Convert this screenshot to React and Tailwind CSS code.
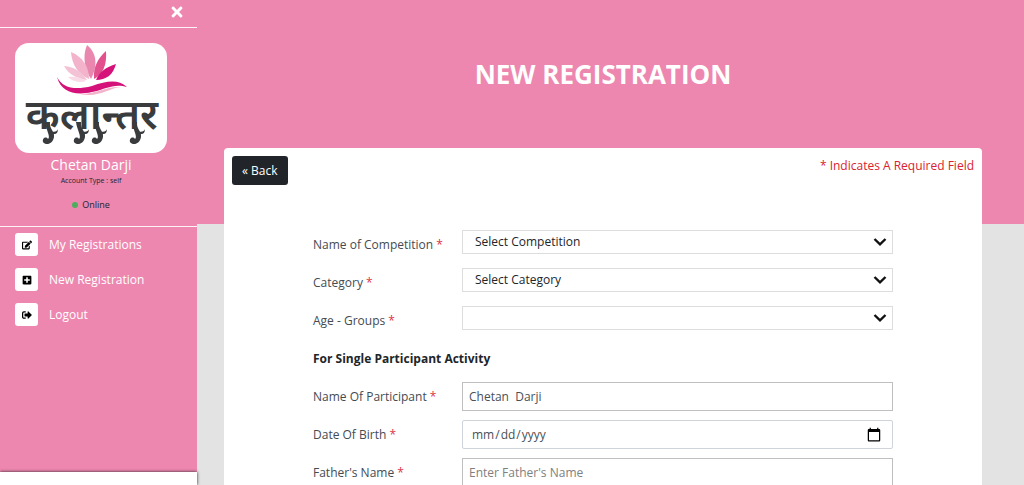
import { FaEdit, FaPlusSquare, FaSignOutAlt, FaTimes } from 'react-icons/fa';

const menuItems = [
  { label: 'My Registrations', icon: FaEdit },
  { label: 'New Registration', icon: FaPlusSquare },
  { label: 'Logout', icon: FaSignOutAlt },
];

function Logo() {
  return (
    <svg viewBox="0 0 152 110" className="block w-full" role="img" aria-label="Logo">
      {/* lotus petals */}
      <path d="M72 2C67 14 70 27 76 36C82 24 83 11 72 2Z" fill="#e987ae" />
      <path d="M56 9C57 22 63 31 74 36C74 24 68 14 56 9Z" fill="#f2b3cb" />
      <path d="M49 23C53 31 63 36 72 37C67 29 60 24 49 23Z" fill="#f4c2d5" />
      <path d="M53 34C58 39 65 40 71 38C66 34 60 33 53 34Z" fill="#f8dbe6" />
      <path d="M91 8C83 15 78 24 79 36C88 31 92 22 91 8Z" fill="#e2508d" />
      <path d="M101 21C91 24 84 29 81 37C91 37 98 32 101 21Z" fill="#d5127a" />
      <path d="M42 34C48 46 61 47 77 43C92 38 103 36 112 44C99 40 91 46 77 49C60 53 46 49 42 34Z" fill="#d5127a" />
      <path d="M65 51C81 51 92 43 106 44C94 45 84 55 65 51Z" fill="#f2b3cb" />
      <text
        x="77"
        y="86"
        textAnchor="middle"
        fontSize="42"
        fontWeight="600"
        fill="#393b3d"
        className="font-['Noto_Sans_Devanagari','Noto_Sans',sans-serif]"
      >
        कलान्तर
      </text>
      {/* ink flourishes under the wordmark */}
      <g fill="#393b3d">
        <path d="M35 79C34 86 40 88 39 94C38 101 31 103 28 99C27 95 31 93 33 96C36 94 31 87 30 79ZM35 87C38 90 42 89 43 86C43 92 38 93 35 87Z" />
        <path d="M66 79C65 86 71 88 70 94C69 101 62 103 59 99C58 95 62 93 64 96C67 94 62 87 61 79ZM66 87C69 90 73 89 74 86C74 92 69 93 66 87Z" />
        <path d="M84 79C83 86 89 88 88 94C87 101 80 103 77 99C76 95 80 93 82 96C85 94 80 87 79 79ZM84 87C87 90 91 89 92 86C92 92 87 93 84 87Z" />
        <path d="M122 79C121 86 127 88 126 94C125 101 118 103 115 99C114 95 118 93 120 96C123 94 118 87 117 79ZM122 87C125 90 129 89 130 86C130 92 125 93 122 87Z" />
      </g>
    </svg>
  );
}

function Sidebar() {
  return (
    <aside className="relative flex w-[197px] shrink-0 flex-col bg-[#ed87b0] text-white">
      <div className="flex h-7 items-start justify-end border-b border-white/90 pt-1 pr-3">
        <button type="button" aria-label="Close menu">
          <FaTimes className="size-4" />
        </button>
      </div>

      <div className="flex flex-col items-center border-b border-white/90 pt-[15px] pr-[30px] pb-[15px] pl-[15px]">
        <div className="w-full overflow-hidden rounded-[14px] bg-white">
          <Logo />
        </div>
        <p className="pt-0.5 text-[14px] leading-5">Chetan Darji</p>
        <p className="text-[7px] leading-3 text-[#212529]">Account Type : self</p>
        <p className="mt-3 flex items-center gap-1 text-[9px] leading-3 text-[#212529]">
          <span className="size-1.5 rounded-full bg-[#4cae5c]" />
          Online
        </p>
      </div>

      <nav className="flex flex-col gap-3 pt-1.5 pl-[15px]">
        {menuItems.map(({ label, icon: Icon }) => (
          <a key={label} href="#" className="flex h-[23px] items-center gap-[11px]">
            <span className="flex size-[23px] items-center justify-center rounded-[3px] bg-white text-black">
              <Icon className="size-2.5" />
            </span>
            {label}
          </a>
        ))}
      </nav>

      <div className="mt-auto h-[13px] bg-white shadow-[0_0_3px_0_#222222]" />
    </aside>
  );
}

function Field({ id, label, children }) {
  return (
    <div className="grid h-[29px] grid-cols-[149px_1fr] items-start">
      <label htmlFor={id} className="leading-[29px] text-[#444b52]">
        {label} <span className="text-[#dc3545]">*</span>
      </label>
      {children}
    </div>
  );
}

function SelectField({ id, label, placeholder }) {
  return (
    <Field id={id} label={label}>
      <div className="relative">
        <select id={id} className="block h-6 w-full appearance-none border border-[#dddddd] bg-white pl-3 text-[#212529]">
          <option>{placeholder}</option>
        </select>
        <svg
          viewBox="0 0 14 10"
          className="pointer-events-none absolute top-[7px] right-1.5 h-2.5 w-3.5"
          fill="none"
          stroke="#111111"
          strokeWidth="2.4"
        >
          <path d="M1.5 2L7 7.4L12.5 2" />
        </svg>
      </div>
    </Field>
  );
}

export default function App() {
  return (
    <div className="flex h-screen overflow-hidden bg-[#e3e3e3] font-['Open_Sans','Noto_Sans',sans-serif] text-[12px]">
      <Sidebar />

      <main className="min-w-0 flex-1">
        <header className="h-56 bg-[#ed87b0] pr-[42px] pl-[27px]">
          <h1 className="text-center text-[26px] leading-[148px] font-bold text-white">NEW REGISTRATION</h1>
        </header>

        <section className="-mt-[76px] mr-[42px] ml-[27px] min-h-screen rounded-t bg-white">
          <div className="flex items-start justify-between p-2">
            <button type="button" className="h-[29px] rounded-[3px] bg-[#212529] px-2.5 text-white">
              « Back
            </button>
            <p className="leading-5 text-[#d9232e]">* Indicates A Required Field</p>
          </div>

          <form className="flex flex-col gap-[9px] px-[89px] pt-[37px]">
            <SelectField id="competition" label="Name of Competition" placeholder="Select Competition" />
            <SelectField id="category" label="Category" placeholder="Select Category" />
            <SelectField id="age-group" label="Age - Groups" placeholder="" />

            <h2 className="leading-[29px] font-bold text-[#212529]">For Single Participant Activity</h2>

            <Field id="participant" label="Name Of Participant">
              <input
                id="participant"
                type="text"
                defaultValue="Chetan  Darji"
                className="h-[29px] w-full border border-[#bfbfbf] px-1.5 text-[#495057]"
              />
            </Field>
            <Field id="dob" label="Date Of Birth">
              <input
                id="dob"
                type="date"
                className="h-[29px] w-full rounded-[2px] border border-[#ced4da] px-2 text-[#495057] [&::-webkit-calendar-picker-indicator]:size-4"
              />
            </Field>
            <Field id="father" label="Father's Name">
              <input
                id="father"
                type="text"
                placeholder="Enter Father's Name"
                className="h-[29px] w-full border border-[#bfbfbf] px-1.5 placeholder:text-[#808080]"
              />
            </Field>
          </form>
        </section>
      </main>
    </div>
  );
}
